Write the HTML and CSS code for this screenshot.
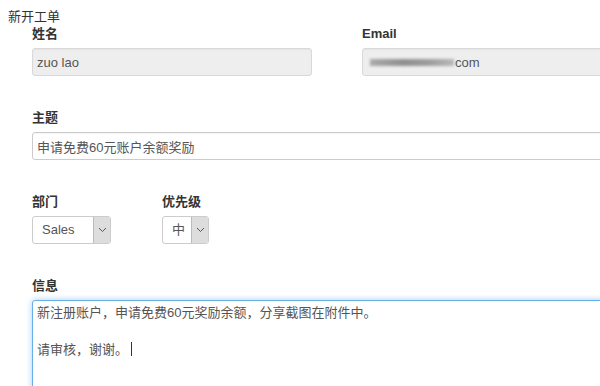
FILE: index.html
```html
<!DOCTYPE html>
<html lang="zh-CN">
<head>
  <meta charset="UTF-8">
  <meta name="viewport" content="width=device-width, initial-scale=1.0">
  <title>新开工单</title>
  <link rel="stylesheet" href="styles.css">
</head>
<body>
  <div class="page">
    <div class="page-title">新开工单</div>
    <form class="ticket-form">
      <div class="form-row">
        <div class="form-group half">
          <label>姓名</label>
          <input class="form-control" type="text" value="zuo lao" disabled>
        </div>
        <div class="form-group half">
          <label>Email</label>
          <div class="form-control disabled"><span class="blurred"></span>com</div>
        </div>
      </div>

      <div class="form-group">
        <label>主题</label>
        <input class="form-control" type="text" value="申请免费60元账户余额奖励">
      </div>

      <div class="form-row selects">
        <div class="form-group">
          <label>部门</label>
          <div class="select dept">
            <span class="select-value">Sales</span>
            <span class="select-arrow">
              <svg width="9" height="6" viewBox="0 0 9 6"><path d="M1 1l3.5 3.5L8 1" fill="none" stroke="#555" stroke-width="1"/></svg>
            </span>
          </div>
        </div>
        <div class="form-group">
          <label>优先级</label>
          <div class="select priority">
            <span class="select-value">中</span>
            <span class="select-arrow">
              <svg width="9" height="6" viewBox="0 0 9 6"><path d="M1 1l3.5 3.5L8 1" fill="none" stroke="#555" stroke-width="1"/></svg>
            </span>
          </div>
        </div>
      </div>

      <div class="form-group">
        <label>信息</label>
        <div class="form-control textarea focused">
          <p>新注册账户，申请免费60元奖励余额，分享截图在附件中。</p>
          <p>&nbsp;</p>
          <p>请审核，谢谢。<span class="caret"></span></p>
        </div>
      </div>
    </form>
  </div>
</body>
</html>
```

FILE: styles.css
```css
body {
  margin: 0;
  font-family: "Liberation Sans", "Noto Sans CJK SC", sans-serif;
  font-size: 13px;
  color: #333;
  background: #fff;
  overflow: hidden;
}

.page {
  padding: 9px 0 0 8px;
  width: 700px;
}

.page-title {
  line-height: 16px;
}

.ticket-form {
  padding-left: 24px;
}

.form-row {
  display: flex;
  gap: 50px;
}

.form-row.selects {
  gap: 51px;
}

.form-group {
  margin-bottom: 33px;
}

.form-group.half {
  width: 280px;
}

.form-group label {
  display: block;
  font-weight: bold;
  line-height: 18px;
  margin-bottom: 5px;
  color: #333;
}

.form-control {
  display: flex;
  align-items: center;
  box-sizing: border-box;
  width: 100%;
  height: 28px;
  margin: 0;
  padding: 0 4px;
  border: 1px solid #ccc;
  border-radius: 3px;
  background: #fff;
  font-family: inherit;
  font-size: 13px;
  color: #555;
  box-shadow: inset 0 1px 1px rgba(0, 0, 0, 0.04);
}

.form-control:disabled,
.form-control.disabled {
  background: #eee;
  border-color: #d9d9d9;
}

.blurred {
  display: inline-block;
  width: 84px;
  height: 7px;
  margin: 0 1px 0 3px;
  background: linear-gradient(90deg, #999, #777 40%, #888 70%, #aaa);
  filter: blur(1.5px);
  opacity: 0.8;
}

.select {
  display: flex;
  box-sizing: border-box;
  height: 28px;
  border: 1px solid #ccc;
  border-radius: 3px;
  background: #fff;
  color: #555;
  overflow: hidden;
}

.select.dept {
  width: 79px;
}

.select.priority {
  width: 47px;
}

.select-value {
  flex: 1;
  line-height: 26px;
  padding-left: 9px;
}

.select-arrow {
  display: flex;
  align-items: center;
  justify-content: center;
  width: 16px;
  background: #ddd;
  border-left: 1px solid #bbb;
}

.textarea {
  display: block;
  height: 120px;
  padding: 3px 4px;
  line-height: 18.5px;
  border-color: #66afe9;
  box-shadow: 0 0 6px rgba(102, 175, 233, 0.6);
}

.textarea p {
  margin: 0;
}

.caret {
  display: inline-block;
  width: 1px;
  height: 14px;
  margin-left: 3px;
  background: #333;
  vertical-align: -2px;
}
```
